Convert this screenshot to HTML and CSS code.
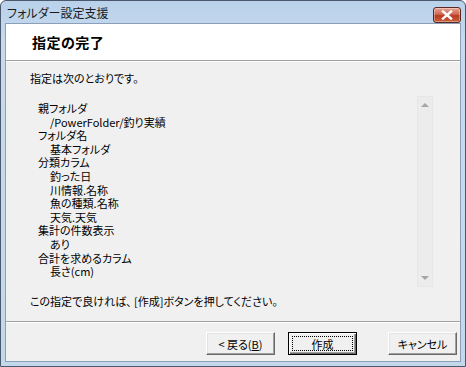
FILE: index.html
```html
<!DOCTYPE html>
<html lang="ja">
<head>
<meta charset="utf-8">
<title>フォルダー設定支援</title>
<link rel="stylesheet" href="styles.css">
</head>
<body>
<div class="window">
  <div class="titlebar">
    <span class="title">フォルダー設定支援</span>
    <span class="close">
      <svg width="12" height="10" viewBox="0 0 12 10"><path d="M2 1.5 L10 8.5 M10 1.5 L2 8.5" stroke="#fff" stroke-width="2.4" stroke-linecap="square"/></svg>
    </span>
  </div>
  <div class="client">
    <div class="header"><h1 class="heading">指定の完了</h1></div>
    <div class="body">
      <p class="intro">指定は次のとおりです。</p>
      <div class="listbox">
        <div class="lines">
          <div class="l1">親フォルダ</div>
          <div class="l2">/PowerFolder/釣り実績</div>
          <div class="l1">フォルダ名</div>
          <div class="l2">基本フォルダ</div>
          <div class="l1">分類カラム</div>
          <div class="l2">釣った日</div>
          <div class="l2">川情報.名称</div>
          <div class="l2">魚の種類.名称</div>
          <div class="l2">天気.天気</div>
          <div class="l1">集計の件数表示</div>
          <div class="l2">あり</div>
          <div class="l1">合計を求めるカラム</div>
          <div class="l2">長さ(cm)</div>
        </div>
        <div class="scrollbar">
          <span class="arrow up"></span>
          <span class="arrow down"></span>
        </div>
      </div>
      <p class="note">この指定で良ければ、 [作成]ボタンを押してください。</p>
    </div>
    <div class="footer">
      <button class="btn">&lt; 戻る(<u>B</u>)</button>
      <button class="btn default"><span class="focus">作成</span></button>
      <button class="btn cancel">キャンセル</button>
    </div>
  </div>
</div>
</body>
</html>
```

FILE: styles.css
```css
* { box-sizing: border-box; }
html, body { margin: 0; padding: 0; }
body {
  width: 466px;
  height: 367px;
  overflow: hidden;
  font-family: "MS UI Gothic", "Noto Sans CJK JP", sans-serif;
  font-size: 11px;
  font-feature-settings: "palt";
  color: #000;
}
.window {
  width: 466px;
  height: 367px;
  border: 1px solid #4a5a6c;
  border-radius: 6px 6px 0 0;
  background: linear-gradient(#b9d1ea, #c7daee 40px, #c4d8ec);
  display: flex;
  flex-direction: column;
  padding: 0 4px 4px 4px;
}
.titlebar {
  height: 22px;
  display: flex;
  align-items: center;
  justify-content: space-between;
  padding-left: 2px;
  padding-right: 0;
}
.title {
  font-size: 12px;
  color: #1a1a1a;
  line-height: 1;
  margin-top: 2px;
}
.close {
  width: 28px;
  height: 16px;
  margin-top: 5px;
  border: 1px solid #5a2a22;
  border-radius: 3px;
  background: linear-gradient(#e8a593, #d06750 45%, #b83b21 55%, #c8603c);
  display: flex;
  align-items: center;
  justify-content: center;
  box-shadow: inset 0 0 0 1px rgba(255,255,255,0.35);
}
.close svg { display: block; }
.client {
  flex: 1;
  background: #f0f0f0;
  border: 1px solid #8ba0b8;
  display: flex;
  flex-direction: column;
}
.header {
  height: 37px;
  background: #fff;
  border-bottom: 1px solid #a0a0a0;
  box-shadow: 0 1px 0 #fff;
  display: flex;
  align-items: center;
  padding-left: 26px;
}
.heading {
  margin: 0;
  font-size: 14px;
  font-weight: bold;
  letter-spacing: 0.5px;
}
.body {
  flex: 1;
  padding: 11px 0 0 24px;
  display: flex;
  flex-direction: column;
}
.intro {
  margin: 0;
  height: 13px;
  line-height: 13px;
}
.listbox {
  display: flex;
  margin-top: 11px;
  height: 191px;
}
.lines {
  flex: 1;
  padding: 6px 0 0 8px;
  line-height: 13.6px;
}
.l2 { padding-left: 12px; }
.scrollbar {
  width: 16px;
  margin-right: 27px;
  background: #ececec;
  border: 1px solid #e6e6e6;
  display: flex;
  flex-direction: column;
  justify-content: space-between;
  align-items: center;
  padding: 6px 0;
}
.arrow {
  width: 0;
  height: 0;
  border-left: 4px solid transparent;
  border-right: 4px solid transparent;
}
.arrow.up { border-bottom: 4px solid #a6a6a6; }
.arrow.down { border-top: 4px solid #a6a6a6; }
.note {
  margin: 8px 0 0;
  line-height: 13px;
}
.footer {
  height: 40px;
  border-top: 1px solid #a0a0a0;
  box-shadow: inset 0 1px 0 #fff;
  display: flex;
  justify-content: flex-end;
  align-items: flex-start;
  padding: 10px 3px 0 0;
  gap: 13px;
}
.btn {
  width: 69px;
  height: 23px;
  font: inherit;
  color: #000;
  background: #f0f0f0;
  border: 1px solid;
  border-color: #fff #696969 #696969 #fff;
  box-shadow: inset -1px -1px 0 #a0a0a0, inset 1px 1px 0 #e3e3e3;
  padding: 0;
  display: flex;
  align-items: center;
  justify-content: center;
}
.btn u { text-decoration: underline; }
.btn.default {
  border: 1px solid #000;
  box-shadow: inset 1px 1px 0 #fff, inset -1px -1px 0 #696969, inset -2px -2px 0 #a0a0a0;
  padding: 3px;
}
.focus {
  flex: 1;
  align-self: stretch;
  display: flex;
  align-items: center;
  justify-content: center;
  border: 1px dotted #000;
}
.btn.cancel { margin-left: 18px; }
```
